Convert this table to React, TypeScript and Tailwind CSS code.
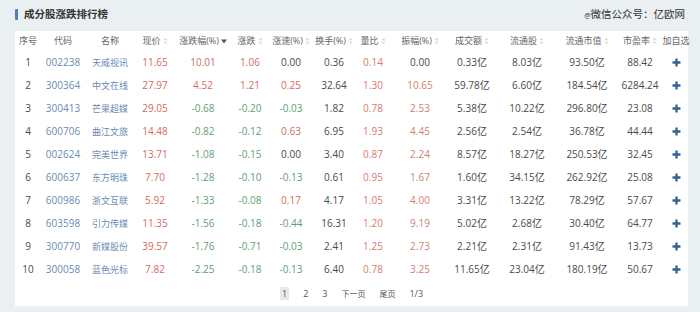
const RED = 'text-[#d46b5e]';
const GREEN = 'text-[#5f9e72]';
const DARK = 'text-[#4a4a4a]';
const BLUE = 'text-[#6a8bb2]';

type Row = string[];

// 序号 代码 名称 现价 涨跌幅 涨跌 涨速 换手 量比 振幅 成交额 流通股 流通市值 市盈率
const rows: Row[] = [
  ['1', '002238', '天威视讯', '11.65', '10.01', '1.06', '0.00', '0.36', '0.14', '0.00', '0.33亿', '8.03亿', '93.50亿', '88.42'],
  ['2', '300364', '中文在线', '27.97', '4.52', '1.21', '0.25', '32.64', '1.30', '10.65', '59.78亿', '6.60亿', '184.54亿', '6284.24'],
  ['3', '300413', '芒果超媒', '29.05', '-0.68', '-0.20', '-0.03', '1.82', '0.78', '2.53', '5.38亿', '10.22亿', '296.80亿', '23.08'],
  ['4', '600706', '曲江文旅', '14.48', '-0.82', '-0.12', '0.63', '6.95', '1.93', '4.45', '2.56亿', '2.54亿', '36.78亿', '44.44'],
  ['5', '002624', '完美世界', '13.71', '-1.08', '-0.15', '0.00', '3.40', '0.87', '2.24', '8.57亿', '18.27亿', '250.53亿', '32.45'],
  ['6', '600637', '东方明珠', '7.70', '-1.28', '-0.10', '-0.13', '0.61', '0.95', '1.67', '1.60亿', '34.15亿', '262.92亿', '25.08'],
  ['7', '600986', '浙文互联', '5.92', '-1.33', '-0.08', '0.17', '4.17', '1.05', '4.00', '3.31亿', '13.22亿', '78.29亿', '57.67'],
  ['8', '603598', '引力传媒', '11.35', '-1.56', '-0.18', '-0.44', '16.31', '1.20', '9.19', '5.02亿', '2.68亿', '30.40亿', '64.77'],
  ['9', '300770', '新媒股份', '39.57', '-1.76', '-0.71', '-0.03', '2.41', '1.25', '2.73', '2.21亿', '2.31亿', '91.43亿', '13.73'],
  ['10', '300058', '蓝色光标', '7.82', '-2.25', '-0.18', '-0.13', '6.40', '0.78', '3.25', '11.65亿', '23.04亿', '180.19亿', '50.67'],
];

const headers: { label: string; sort?: 'idle' | 'active' }[] = [
  { label: '序号' },
  { label: '代码' },
  { label: '名称' },
  { label: '现价', sort: 'idle' },
  { label: '涨跌幅(%)', sort: 'active' },
  { label: '涨跌', sort: 'idle' },
  { label: '涨速(%)', sort: 'idle' },
  { label: '换手(%)', sort: 'idle' },
  { label: '量比', sort: 'idle' },
  { label: '振幅(%)', sort: 'idle' },
  { label: '成交额', sort: 'idle' },
  { label: '流通股', sort: 'idle' },
  { label: '流通市值', sort: 'idle' },
  { label: '市盈率', sort: 'idle' },
  { label: '加自选' },
];

const GRID =
  'grid grid-cols-[26px_44px_50px_40px_56px_38px_44px_42px_36px_58px_46px_64px_56px_50px_22px] items-center';

const signColor = (v: string) => {
  if (v.startsWith('-')) return GREEN;
  if (parseFloat(v) === 0) return DARK;
  return RED;
};

const SortIcon = ({ active }: { active?: boolean }) =>
  active ? (
    <svg width="6" height="5" viewBox="0 0 6 5" className="ml-[2px]">
      <path d="M0 0.5h6L3 4.5z" fill="#555" />
    </svg>
  ) : (
    <svg width="5" height="8" viewBox="0 0 5 8" className="ml-[2px]">
      <path d="M0.5 3.2L2.5 0.8L4.5 3.2z" fill="#dadada" />
      <path d="M0.5 4.8L2.5 7.2L4.5 4.8z" fill="#dadada" />
    </svg>
  );

const PlusIcon = () => (
  <svg width="9" height="9" viewBox="0 0 9 9">
    <path d="M4.5 0.5v8M0.5 4.5h8" stroke="#35628f" strokeWidth="2.3" />
  </svg>
);

const cellColor = (i: number, v: string) => {
  switch (i) {
    case 0:
      return DARK;
    case 1:
    case 2:
      return BLUE;
    case 3:
      return RED;
    case 4:
    case 5:
    case 6:
      return signColor(v);
    case 8:
      return 'text-[#d57b6e]';
    case 9:
      return parseFloat(v) === 0 ? DARK : 'text-[#cf8171]';
    default:
      return DARK;
  }
};

export default function App() {
  return (
    <div
      className="w-[700px] h-[312px] overflow-hidden bg-[#eaeff1]"
      style={{ fontFamily: "'Open Sans', 'Noto Sans CJK SC', sans-serif" }}
    >
      {/* Title */}
      <div className="h-[31px] flex items-center justify-between pl-[15px] pr-[15px] pb-[3px]">
        <div className="flex items-center gap-[6px]">
          <span className="w-[3px] h-[11px] bg-[#4a7fc0] rounded-[1px]" />
          <span className="text-[10.5px] font-bold text-[#333] leading-none">成分股涨跌排行榜</span>
        </div>
        <span className="text-[10.5px] text-[#333] leading-none pt-[1px]">
          <span className="text-[7px]">@</span>微信公众号：亿欧网
        </span>
      </div>

      {/* Panel */}
      <div className="ml-[15px] w-[673px] h-[275px] bg-white">
        <div className={`${GRID} h-[20px] text-[9px] text-[#666]`}>
          {headers.map((h) => (
            <div key={h.label} className="flex items-center justify-center whitespace-nowrap">
              <span>{h.label}</span>
              {h.sort && <SortIcon active={h.sort === 'active'} />}
            </div>
          ))}
        </div>

        {rows.map((r) => (
          <div key={r[0]} className={`${GRID} h-[23px] text-[10px]`}>
            {r.map((v, i) => (
              <div
                key={i}
                className={`text-center whitespace-nowrap ${i === 2 ? 'text-[9px]' : ''} ${cellColor(i, v)}`}
              >
                {v}
              </div>
            ))}
            <div className="flex justify-center">
              <PlusIcon />
            </div>
          </div>
        ))}

        {/* Pagination */}
        <div className="h-[25px] flex items-center justify-center gap-[14px] text-[9px] text-[#555]">
          <span className="px-[2px] bg-[#e8e8e8] leading-[13px]">1</span>
          <span>2</span>
          <span>3</span>
          <span className="text-[8px]">下一页</span>
          <span className="text-[8px]">尾页</span>
          <span>1/3</span>
        </div>
      </div>
    </div>
  );
}
